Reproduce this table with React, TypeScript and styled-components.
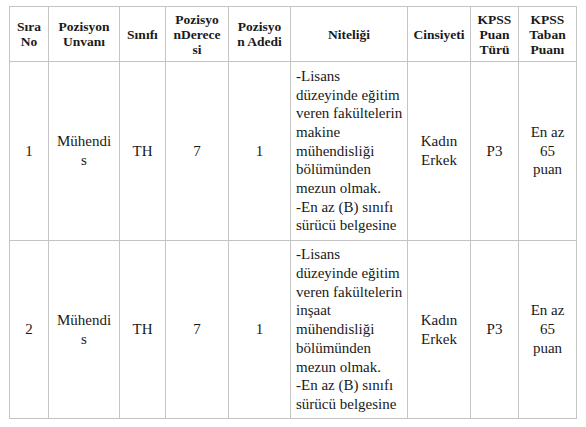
import React from 'react';
import styled, { createGlobalStyle } from 'styled-components';

const GlobalStyle = createGlobalStyle`
  html, body {
    margin: 0;
    padding: 0;
    background: #ffffff;
  }
  body {
    font-family: "Liberation Serif", serif;
  }
`;

const Page = styled.div`
  padding: 6px 0 0 9px;
  font-family: "Liberation Serif", serif;
  color: #1a1a1a;
`;

const Table = styled.table`
  border-collapse: collapse;
  table-layout: fixed;
  width: 567px;
`;

const HeadCell = styled.th`
  border: 1px solid #c4c4c4;
  height: 54px;
  padding: 0 2px;
  font-family: "Liberation Serif", serif;
  font-size: 13.5px;
  line-height: 15px;
  font-weight: bold;
  text-align: center;
  vertical-align: middle;
`;

const Cell = styled.td<{ $left?: boolean }>`
  border: 1px solid #c4c4c4;
  padding: ${p => (p.$left ? '0 4px 0 5px' : '0 2px')};
  font-family: "Liberation Serif", serif;
  font-size: 15px;
  line-height: 18.7px;
  text-align: ${p => (p.$left ? 'left' : 'center')};
  vertical-align: middle;
  white-space: nowrap;
`;

const Row = styled.tr<{ $height: number }>`
  height: ${p => p.$height}px;
`;

const widths = [39, 71, 46, 63, 62, 117, 63, 48, 58];

const headers = [
  ['Sıra', 'No'],
  ['Pozisyon', 'Unvanı'],
  ['Sınıfı'],
  ['Pozisyo', 'nDerece', 'si'],
  ['Pozisyo', 'n Adedi'],
  ['Niteliği'],
  ['Cinsiyeti'],
  ['KPSS', 'Puan', 'Türü'],
  ['KPSS', 'Taban', 'Puanı'],
];

const rows = [
  {
    no: '1',
    height: 179,
    detail: [
      '-Lisans',
      'düzeyinde eğitim',
      'veren fakültelerin',
      'makine',
      'mühendisliği',
      'bölümünden',
      'mezun olmak.',
      '-En az (B) sınıfı',
      'sürücü belgesine',
    ],
  },
  {
    no: '2',
    height: 178,
    detail: [
      '-Lisans',
      'düzeyinde eğitim',
      'veren fakültelerin',
      'inşaat',
      'mühendisliği',
      'bölümünden',
      'mezun olmak.',
      '-En az (B) sınıfı',
      'sürücü belgesine',
    ],
  },
];

const Lines: React.FC<{ lines: string[] }> = ({ lines }) => (
  <>
    {lines.map((l, i) => (
      <React.Fragment key={i}>
        {i > 0 && <br />}
        {l}
      </React.Fragment>
    ))}
  </>
);

const App: React.FC = () => (
  <Page>
    <GlobalStyle />
    <Table>
      <colgroup>
        {widths.map((w, i) => (
          <col key={i} style={{ width: w }} />
        ))}
      </colgroup>
      <thead>
        <tr>
          {headers.map((h, i) => (
            <HeadCell key={i}>
              <Lines lines={h} />
            </HeadCell>
          ))}
        </tr>
      </thead>
      <tbody>
        {rows.map(r => (
          <Row key={r.no} $height={r.height}>
            <Cell>{r.no}</Cell>
            <Cell>
              <Lines lines={['Mühendi', 's']} />
            </Cell>
            <Cell>TH</Cell>
            <Cell>7</Cell>
            <Cell>1</Cell>
            <Cell $left>
              <Lines lines={r.detail} />
            </Cell>
            <Cell>
              <Lines lines={['Kadın', 'Erkek']} />
            </Cell>
            <Cell>P3</Cell>
            <Cell>
              <Lines lines={['En az', '65', 'puan']} />
            </Cell>
          </Row>
        ))}
      </tbody>
    </Table>
  </Page>
);

export default App;
